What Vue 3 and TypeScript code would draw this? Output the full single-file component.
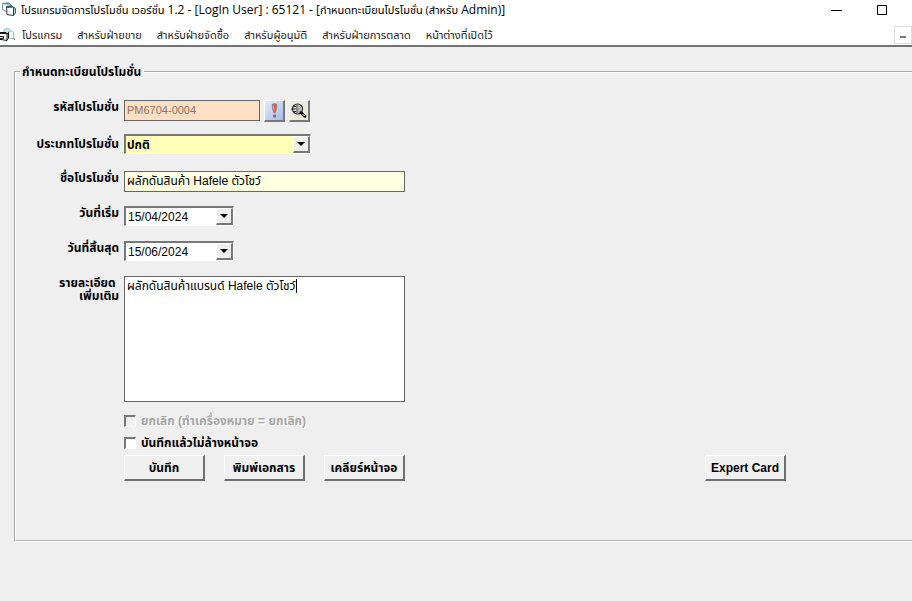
<script setup lang="ts">
import { ref } from 'vue'

const menus: string[] = [
  'โปรแกรม',
  'สำหรับฝ่ายขาย',
  'สำหรับฝ่ายจัดซื้อ',
  'สำหรับผู้อนุมัติ',
  'สำหรับฝ่ายการตลาด',
  'หน้าต่างที่เปิดไว้',
]

const code = ref('PM6704-0004')
const promoType = ref('ปกติ')
const promoName = ref('ผลักดันสินค้า Hafele ตัวโชว์')
const startDate = ref('15/04/2024')
const endDate = ref('15/06/2024')
const details = ref('ผลักดันสินค้าแบรนด์ Hafele ตัวโชว์')
const cancelled = ref(false)
const keepForm = ref(false)
</script>

<template>
  <div class="window">
    <header class="chrome">
      <div class="titlebar">
        <svg class="app-icon" width="16" height="16" viewBox="0 0 16 16">
          <path d="M1.500 1.500L8 1l2 2v5l-5 1.500-3.500-2z" fill="#f3fafa" stroke="#6f8f94" />
          <path d="M1 1l7-.5 2 2H3z" fill="#5b9aa2" />
          <path d="M5.500 4.500L11 4l1.500 1.500v8L6 12.500z" fill="#fff" stroke="#333" />
          <path d="M5 4l6-.5 1.500 2-6 .5z" fill="#2f5a60" />
          <path d="M12.500 5v8.500l2-2.500V6.500z" fill="#a9cdd1" stroke="#333" stroke-width=".8" />
        </svg>
        <h1><span>โปรแกรมจัดการโปรโมชั่น เวอร์ชั่น</span> 1.2 - [LogIn User] : 65121 - [<span>กำหนดทะเบียนโปรโมชั่น (สำหรับ</span> Admin)]</h1>
        <div class="window-controls">
          <button type="button" aria-label="Minimize">
            <svg width="11" height="11" viewBox="0 0 11 11"><path d="M0 5.500h11" stroke="#000" /></svg>
          </button>
          <button type="button" aria-label="Maximize">
            <svg width="10" height="10" viewBox="0 0 10 10"><path d="M.5.5h9v9h-9z" fill="none" stroke="#000" /></svg>
          </button>
        </div>
      </div>
      <nav class="menubar">
        <svg class="doc-icon" width="16" height="16" viewBox="0 0 16 16">
          <path d="M3.500 2.500L8 1l2 1.500V9l-5 1z" fill="#c5e6e6" stroke="#9fcfd1" />
          <path d="M8.500 4.500L12 4l1.500 1v7l-5-1z" fill="#eef7f7" stroke="#a5c4c7" />
          <path d="M0 5.500h5.500L7 7v6.500L1 12.500H0" fill="#fff" stroke="#111" />
          <path d="M0 5h6l1 2H0z" fill="#111" />
          <path d="M7 7l1.500-1.500V11L7 13M0 9.500h3.500v2H0" fill="none" stroke="#111" />
          <path d="M13.500 11.500h1V13" fill="none" stroke="#777" />
        </svg>
        <a v-for="menu in menus" :key="menu" href="#">{{ menu }}</a>
        <button class="child-minimize" type="button" aria-label="Minimize form">
          <svg width="6" height="2" viewBox="0 0 6 2"><path d="M0 1h6" stroke="#777" stroke-width="2" /></svg>
        </button>
      </nav>
    </header>

    <main>
      <fieldset class="panel">
        <legend>กำหนดทะเบียนโปรโมชั่น</legend>
        <form class="form" @submit.prevent>
          <div class="row code-row">
            <label for="code">รหัสโปรโมชั่น</label>
            <input id="code" v-model="code" class="flat code" disabled />
            <button class="tool blue" type="button" aria-label="Alert">
              <svg width="16" height="18" viewBox="0 0 16 18">
                <path d="M6 2.500q2.500-2 5 0 0 5-1.800 8.500H8Q6 7 6 2.500z" fill="#c4665c" stroke="#a8707c" stroke-width=".6" />
                <path d="M7.300 3.500l.8 4.500" stroke="#e8aca0" />
                <circle cx="8.600" cy="14" r="1.600" fill="#96506a" />
              </svg>
            </button>
            <button class="tool" type="button" aria-label="Search">
              <svg width="18" height="18" viewBox="0 0 18 18">
                <circle cx="7.500" cy="7" r="5" fill="#f4f4f2" stroke="#222" stroke-width="1.200" />
                <path d="M8 3v8q3.500-1 3.500-4T8 3z" fill="#b4b4b4" />
                <path d="M1 7h5M3 4.500h3M3 9.500h3M7 3v8" stroke="#222" fill="none" />
                <path d="M11 10.500l4 4" stroke="#111" stroke-width="2.800" stroke-linecap="round" />
                <path d="M12.500 12l2 2" stroke="#fff" />
              </svg>
            </button>
          </div>

          <div class="row type-row">
            <label for="type">ประเภทโปรโมชั่น</label>
            <div class="sunken combo type">
              <select id="type" v-model="promoType"><option>ปกติ</option></select>
              <span class="arrow" aria-hidden="true"></span>
            </div>
          </div>

          <div class="row name-row">
            <label for="name">ชื่อโปรโมชั่น</label>
            <input id="name" v-model="promoName" class="flat name" />
          </div>

          <div class="row date-row">
            <label for="start">วันที่เริ่ม</label>
            <div class="sunken combo date">
              <input id="start" v-model="startDate" />
              <button class="arrow" type="button" aria-label="เลือกวันที่เริ่ม"></button>
            </div>
          </div>

          <div class="row date-row">
            <label for="end">วันที่สิ้นสุด</label>
            <div class="sunken combo date">
              <input id="end" v-model="endDate" />
              <button class="arrow" type="button" aria-label="เลือกวันที่สิ้นสุด"></button>
            </div>
          </div>

          <div class="row detail-row">
            <label for="details">รายละเอียด&nbsp;<br />เพิ่มเติม</label>
            <div class="editor">
              <textarea id="details" v-model="details"></textarea>
              <div class="caret-layer" aria-hidden="true"><span>{{ details }}</span></div>
            </div>
          </div>

          <div class="checks">
            <label class="check disabled"><input v-model="cancelled" type="checkbox" disabled />ยกเลิก (ทำเครื่องหมาย = ยกเลิก)</label>
            <label class="check"><input v-model="keepForm" type="checkbox" />บันทึกแล้วไม่ล้างหน้าจอ</label>
          </div>

          <div class="actions">
            <button class="push" type="submit">บันทึก</button>
            <button class="push" type="button">พิมพ์เอกสาร</button>
            <button class="push" type="button">เคลียร์หน้าจอ</button>
            <button class="push expert" type="button">Expert Card</button>
          </div>
        </form>
      </fieldset>
    </main>
  </div>
</template>

<style>
body {
  background: #efefef;
}
</style>

<style scoped>
* {
  box-sizing: border-box;
}
.window {
  min-height: 100vh;
  overflow: hidden;
  background: #efefef;
  color: #000;
  font-family: "Liberation Sans", "Noto Sans Thai", sans-serif;
  font-size: 12px;
  line-height: 14px;
}
input, select, textarea, button {
  margin: 0;
  font: inherit;
  color: inherit;
}
.chrome {
  background: #fff;
  border-bottom: 2px solid #727272;
  font-family: "Open Sans", "Noto Sans Thai", sans-serif;
}
.titlebar {
  display: flex;
  align-items: center;
  height: 20px;
  padding-left: 1px;
}
.app-icon {
  flex: none;
}
h1 {
  margin: 0 0 0 4px;
  font-size: 12px;
  font-weight: 400;
  white-space: nowrap;
}
h1 span {
  font-size: 11px;
}
.window-controls {
  display: flex;
  gap: 20px;
  margin-left: auto;
  padding-right: 18px;
}
.window-controls button {
  display: grid;
  place-items: center;
  width: 25px;
  height: 18px;
  padding: 0;
  border: 0;
  background: none;
}
.menubar {
  display: flex;
  align-items: center;
  gap: 15px;
  height: 25px;
  padding-top: 4px;
}
.doc-icon {
  flex: none;
  margin-right: -9px;
}
.menubar a {
  color: #222;
  font-size: 11px;
  text-decoration: none;
  white-space: nowrap;
}
.child-minimize {
  display: grid;
  place-items: end center;
  width: 18px;
  height: 18px;
  margin-left: auto;
  padding: 0 0 5px;
  border: 1px solid #ddd;
  background: #fff;
}
main {
  padding: 18px 0 0 14px;
}
.panel {
  min-width: 0;
  margin: 0 -4px 0 0;
  padding: 0 4px 59px;
  border: 2px groove #fff;
}
legend {
  margin-left: 0;
  padding: 0 3px 0 2px;
  font-weight: 700;
}
.form {
  padding: 21px 0 0;
}
.row {
  display: flex;
  align-items: flex-start;
}
.row label {
  flex: none;
  width: 99px;
  margin-right: 5px;
  padding-top: 1px;
  font-weight: 700;
  text-align: right;
  line-height: 13px;
  white-space: nowrap;
}
.code-row {
  height: 34px;
}
.type-row {
  height: 37px;
}
.type-row label {
  padding-top: 4px;
}
.name-row,
.date-row {
  height: 35px;
}
.flat {
  height: 21px;
  padding: 0 2px 2px;
  border: 1px solid #666;
  border-radius: 0;
}
.code {
  width: 136px;
  margin-right: 4px;
  background: #ffdfc4;
  color: #8b7466;
  font-size: 11px;
}
.name {
  width: 281px;
  background: #ffffe1;
}
.tool {
  display: grid;
  place-items: center;
  width: 21px;
  height: 22px;
  margin-right: 4px;
  padding: 0;
  border: solid;
  border-width: 1px 2px 2px 1px;
  border-color: #fff #777 #777 #fff;
  background: #ece9df;
}
.tool.blue {
  background: linear-gradient(135deg, #e3ebfa, #a5bce5);
}
.sunken {
  border: solid;
  border-width: 2px 1px 1px 2px;
  border-color: #777 #fff #fff #777;
  background: #fff;
}
.combo {
  display: flex;
}
.combo select,
.combo input {
  flex: 1;
  min-width: 0;
  padding: 0 2px;
  border: 0;
  border-radius: 0;
  appearance: none;
  background: transparent;
}
.type {
  width: 187px;
  height: 20px;
  background: #ffffb9;
}
.type select {
  padding: 0 1px;
  font-weight: 700;
}
.date {
  width: 110px;
  height: 20px;
}
.arrow {
  display: grid;
  flex: none;
  place-items: center;
  width: 17px;
  padding: 0;
  border: solid;
  border-width: 1px 2px 2px 1px;
  border-color: #fff #777 #777 #fff;
  background: #efefef;
  pointer-events: none;
}
.arrow::before {
  content: "";
  border: 4px solid transparent;
  border-top-color: #000;
  border-bottom: 0;
}
button.arrow {
  pointer-events: auto;
}
.editor {
  position: relative;
  width: 281px;
  height: 126px;
}
.editor textarea {
  display: block;
  width: 100%;
  height: 100%;
  padding: 2px;
  border: 1px solid #666;
  border-radius: 0;
  resize: none;
  background: #fff;
}
.caret-layer {
  position: absolute;
  top: 3px;
  left: 3px;
  color: transparent;
  pointer-events: none;
}
.caret-layer span {
  border-right: 1px solid #000;
}
.checks {
  display: grid;
  gap: 8px;
  padding: 12px 0 0 104px;
}
.check {
  display: flex;
  align-items: center;
  gap: 5px;
  font-weight: 700;
}
.check input {
  appearance: none;
  width: 12px;
  height: 12px;
  border: solid;
  border-width: 2px 1px 1px 2px;
  border-color: #777 #fff #fff #777;
  background: #fff;
}
.check.disabled {
  color: #a5a5a5;
  text-shadow: 1px 1px #fff;
}
.check.disabled input {
  background: #efefef;
}
.actions {
  display: flex;
  gap: 19px;
  padding: 5px 0 0 104px;
}
.push {
  width: 81px;
  height: 26px;
  padding: 0;
  border: solid;
  border-width: 1px 2px 2px 1px;
  border-color: #fff #6f6f6f #6f6f6f #fff;
  background: #f0f0f0;
  font-weight: 700;
  white-space: nowrap;
}
.expert {
  margin: 0 124px 0 auto;
}
</style>
